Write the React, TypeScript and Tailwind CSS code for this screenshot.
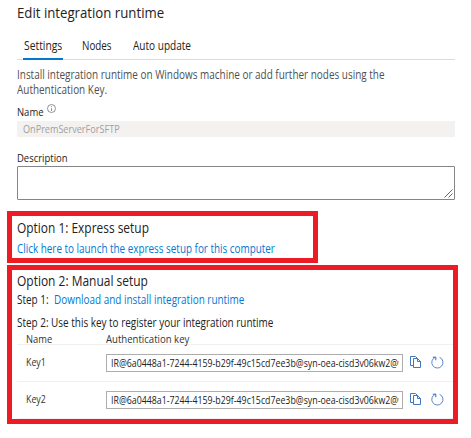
import React from "react";

function InfoIcon() {
  return (
    <svg className="h-[9px] w-[9px]" viewBox="0 0 9 9" fill="none" stroke="#777" strokeWidth="0.8">
      <circle cx="4.5" cy="4.5" r="4" />
      <path d="M4.5 4v3M4.5 2v1" />
    </svg>
  );
}

function CopyIcon() {
  return (
    <svg className="ml-[7px] mt-[11px] h-3 w-[11px] shrink-0" viewBox="0 0 11 12" fill="none" stroke="#3f78bd" strokeWidth="1">
      <path d="M3.5 9.5h-3v-9h5l2 2" />
      <path d="M3.5 2.5h4l3 3v6h-7z" />
      <path d="M7.5 2.5v3h3" />
    </svg>
  );
}

function RefreshIcon() {
  return (
    <svg className="ml-[10px] mt-[11px] h-[13px] w-[13px] shrink-0" viewBox="0 0 13 13" fill="none" stroke="#5b86cc" strokeWidth="1">
      <path d="M8.6 1.3A5.6 5.6 0 1 1 4.4 1.2" />
      <path d="M1.8 1.2h3v3" stroke="#2f6fba" />
    </svg>
  );
}

function KeyRow({ name, value }: { name: string; value: string }) {
  return (
    <div className="flex h-[37px] items-start border-b border-[#f0f0f0]">
      <span className="mt-[9px] h-4 w-[89px] shrink-0 pl-[9px] text-[11px] leading-4 text-[#333]">
        <span className="inline-block origin-left scale-x-[80%]">{name}</span>
      </span>
      <div className="mt-[9px] h-[18px] w-[297px] shrink-0 border border-[#adadad] pl-1">
        <div className="w-[360px] origin-left scale-x-[79.9%] overflow-hidden whitespace-nowrap text-[11px] leading-4 text-[#222]">{value}</div>
      </div>
      <CopyIcon />
      <RefreshIcon />
    </div>
  );
}

export default function App() {
  return (
    <main className="h-[438px] w-[471px] overflow-hidden whitespace-nowrap bg-white pt-1 font-['Open_Sans','Noto_Sans',sans-serif] text-[12px] text-[#222]">
      <div className="ml-[17px] w-[438px]">
        <h1 className="h-5 w-fit origin-left scale-x-[94.3%] text-[14px] font-medium leading-[18px]">Edit integration runtime</h1>
        <nav className="mt-[13px] flex h-[23px] border-b border-[#dcdcdc] pl-[6px] leading-[18px]">
          <span className="h-[23px] w-10 border-b-2 border-[#0078d4] pl-px">
            <span className="inline-block origin-left scale-x-[86%]">Settings</span>
          </span>
          <span className="ml-[19px] w-[51px]">
            <span className="inline-block origin-left scale-x-[82%]">Nodes</span>
          </span>
          <span className="w-[60px]">
            <span className="inline-block origin-left scale-x-[83.7%]">Auto update</span>
          </span>
        </nav>
        <div className="mt-[7px] leading-[15px] text-[#505050]">
          <p className="h-[15px] w-fit origin-left scale-x-[82.9%]">Install integration runtime on Windows machine or add further nodes using the</p>
          <p className="h-[15px] w-fit origin-left scale-x-[82.9%]">Authentication Key.</p>
        </div>
        <div className="mt-[7px] flex h-[17px]">
          <span className="w-[30px] text-[11px] leading-4">
            <span className="inline-block origin-left scale-x-[86%]">Name</span>
          </span>
          <InfoIcon />
        </div>
        <div className="h-4 rounded-[1px] bg-[#f3f2f1] pl-[6px] text-[11px] leading-4 text-[#a0a09e]">
          <span className="inline-block origin-left scale-x-[82.7%]">OnPremServerForSFTP</span>
        </div>
        <div className="mt-[13px] h-4 w-fit origin-left scale-x-[86%] text-[11px] leading-4">Description</div>
        <div className="flex h-[34px] items-end justify-end rounded-[1px] border border-[#858585] p-px">
          <svg className="h-[9px] w-[9px]" viewBox="0 0 9 9" stroke="#555" strokeWidth="0.9">
            <path d="M.5 8.5l8-8M4.5 8.5l4-4" />
          </svg>
        </div>
      </div>
      <section className="ml-[7px] mt-[11px] h-[52px] w-[311px] border-[5px] border-[#ed1c24] pl-[5px]">
        <h2 className="mt-[2px] h-5 w-fit origin-left scale-x-[85.2%] text-[14px] leading-5">Option 1: Express setup</h2>
        <a className="mt-[3px] block w-fit origin-left scale-x-[82.4%] leading-4 text-[#0078d4]">Click here to launch the express setup for this computer</a>
      </section>
      <section className="ml-[7px] mt-[2px] h-[159px] w-[451px] border-[5px] border-[#ed1c24] pl-[5px]">
        <h2 className="mt-px h-5 w-fit origin-left scale-x-[85.5%] text-[14px] leading-5">Option 2: Manual setup</h2>
        <p className="mt-px flex h-4 leading-4">
          <span className="w-[37px]">
            <span className="inline-block origin-left scale-x-[83%]">Step 1:</span>
          </span>
          <a className="origin-left scale-x-[82.8%] text-[#0078d4]">Download and install integration runtime</a>
        </p>
        <p className="mt-[7px] h-4 w-fit origin-left scale-x-[82.8%] leading-4">Step 2: Use this key to register your integration runtime</p>
        <div className="flex h-[14px] border-b border-[#f0f0f0] pl-[9px] text-[11px] font-medium leading-[15px] text-[#333]">
          <span className="w-20">
            <span className="inline-block origin-left scale-x-[85%]">Name</span>
          </span>
          <span className="w-[90px]">
            <span className="inline-block origin-left scale-x-[87%]">Authentication key</span>
          </span>
        </div>
        <KeyRow name="Key1" value="IR@6a0448a1-7244-4159-b29f-49c15cd7ee3b@syn-oea-cisd3v06kw2@w" />
        <KeyRow name="Key2" value="IR@6a0448a1-7244-4159-b29f-49c15cd7ee3b@syn-oea-cisd3v06kw2@w" />
      </section>
    </main>
  );
}
